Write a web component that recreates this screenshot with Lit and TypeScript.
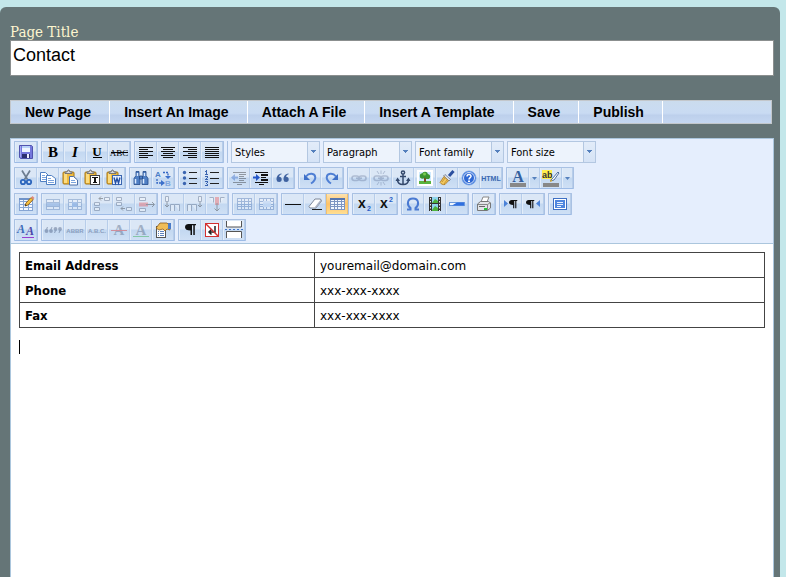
import { LitElement, html, css, svg, nothing, TemplateResult } from "lit";
import { customElement, property } from "lit/decorators.js";
import { classMap } from "lit/directives/class-map.js";

type Box = [number, number, number, number];
const fillBoxes = (color: string, boxes: Box[]) =>
  svg`<g fill=${color} shape-rendering="crispEdges">${boxes.map(
    ([x, y, w, h]) => svg`<rect x=${x} y=${y} width=${w} height=${h}/>`
  )}</g>`;
const textLines = (xs: number[][]) =>
  fillBoxes("#111", xs.map(([x, w], i) => [x, 5 + i * 2, w, 1] as Box));
const gridIcon = (x: number, y: number, w: number, h: number, cols: number, rows: number, c = "#5c7fb5") => {
  const boxes: Box[] = [];
  for (let i = 0; i <= cols; i++) boxes.push([x + Math.round((i * (w - 1)) / cols), y, 1, h]);
  for (let i = 0; i <= rows; i++) boxes.push([x, y + Math.round((i * (h - 1)) / rows), w, 1]);
  return svg`<rect x=${x} y=${y} width=${w} height=${h} fill="#f4f8ff"/>${fillBoxes(c, boxes)}`;
};
const clipboard = svg`
  <rect x="3" y="4" width="11" height="12" rx="1" fill="#f0bb3f" stroke="#a67512"/>
  <rect x="4" y="5" width="3" height="10" fill="#fbdc82"/>
  <path d="M5 5.500V4h2l1-2h1l1 2h2v1.500z" fill="#d8d9dc" stroke="#5e6068" stroke-width=".8"/>`;
const pilcrow = (x: number, y: number, scale = 1) => svg`
  <path transform="translate(${x} ${y}) scale(${scale})" d="M3.500 0H11v1.300H9.800V11H8.300V1.300H7V11H5.500V6.500C2 6.500 0 5.200 0 3.200C0 1.200 1.500 0 3.500 0z" fill="#111"/>`;
const strokeText = (s: string, x: number, size: number, fill: string) =>
  svg`<text x=${x} y="14" text-anchor="middle" font-family="Liberation Sans, sans-serif" font-weight="700" font-size=${size} fill=${fill}>${s}</text>`;
const serif = (s: string, fill: string, extra = "") =>
  svg`<text x="10" y="15" text-anchor="middle" font-family="Liberation Serif, serif" font-weight="700" font-style=${extra || "normal"} font-size="15" fill=${fill}>${s}</text>`;
const link = svg`<g fill="none" stroke="#6c7ea0" stroke-width="1.600"><rect x="3" y="8" width="7" height="4.500" rx="2.200"/><rect x="10" y="8" width="7" height="4.500" rx="2.200"/><path d="M7 10.200h6"/></g>`;

const ICONS: Record<string, TemplateResult> = {
  save: svg`<path d="M3.500 3.500h12l1 1v12h-12l-1-1z" fill="#7577dc" stroke="#5053ae"/>
    <rect x="6" y="4" width="8" height="6" fill="#eef5ff"/><rect x="6" y="4" width="8" height="2" fill="#b8d2f8"/>
    <rect x="6" y="12" width="8" height="4" fill="#2c2f70"/><rect x="11" y="12" width="2" height="4" fill="#eef"/>
    <rect x="4" y="4" width="1" height="11" fill="#a5a9f2"/>`,
  bold: serif("B", "#000"),
  italic: serif("I", "#000", "italic"),
  underline: svg`<text x="10" y="14" text-anchor="middle" font-family="Liberation Serif, serif" font-weight="700" font-size="13" fill="#000">U</text>${fillBoxes("#000", [[6, 15, 9, 1]])}`,
  strike: svg`<text x="10" y="14" text-anchor="middle" font-family="Liberation Serif, serif" font-size="9" fill="#000">ABC</text>${fillBoxes("#000", [[2, 10, 17, 1]])}`,
  left: textLines([[3, 14], [3, 9], [3, 14], [3, 9], [3, 14], [3, 9]]),
  center: textLines([[3, 14], [5, 10], [3, 14], [5, 10], [3, 14], [5, 10]]),
  right: textLines([[3, 14], [8, 9], [3, 14], [8, 9], [3, 14], [8, 9]]),
  full: textLines([[3, 14], [3, 14], [3, 14], [3, 14], [3, 14], [3, 14]]),
  cut: svg`<path d="M6 2.500l5.500 9M14 2.500l-5.500 9" stroke="#6d7d90" stroke-width="1.700"/>
    <g fill="none" stroke="#2d66bd" stroke-width="1.800"><circle cx="7" cy="14" r="2.200"/><circle cx="13" cy="14" r="2.200"/></g>`,
  copy: svg`<g fill="#fff" stroke="#4f7fc2"><path d="M2.500 4.500h5l3 3v6h-8z"/><path d="M8.500 7.500h5l4 3v6h-9z"/></g>
    ${fillBoxes("#7aa3dc", [[4, 7, 3, 1], [4, 9, 4, 1], [4, 11, 4, 1], [10, 10, 3, 1], [10, 12, 6, 1], [10, 14, 6, 1]])}`,
  paste: svg`${clipboard}<path d="M9.500 8.500h4l4 3.500v5h-8z" fill="#fff" stroke="#4c6fa8"/>${fillBoxes("#7aa3dc", [[11, 12, 4, 1], [11, 14, 5, 1]])}`,
  pastetext: svg`${clipboard}<rect x="8.500" y="7.500" width="9" height="9" fill="#fff" stroke="#444"/>${fillBoxes("#111", [[10, 9, 6, 1], [12, 9, 2, 6], [11, 14, 4, 1]])}`,
  pasteword: svg`${clipboard}<rect x="8.500" y="7.500" width="9" height="9" fill="#e9f1ff" stroke="#3b66b0"/><path d="M10 9.500l1.500 5.500 1.500-4.500 1.500 4.500L16 9.500" fill="none" stroke="#2450a5" stroke-width="1.400"/>`,
  find: svg`<g fill="#4f7fc4" stroke="#254a88" stroke-width=".8"><path d="M5 3.500h3v4l1 3v6H3v-6l2-3z"/><path d="M12 3.500h3v4l2 3v6h-6v-6l1-3z"/><path d="M8.500 8h3v3h-3z"/></g>
    <path d="M4.500 11v4.500M12.500 11v4.500M6.500 5v3M13.500 5v3" stroke="#dcebff" stroke-width="1.500"/>`,
  replace: svg`<text x="2" y="9" font-family="Liberation Sans, sans-serif" font-weight="700" font-size="8" fill="#4d7fc8">A</text>
    <text x="12" y="18" font-family="Liberation Sans, sans-serif" font-weight="700" font-size="8" fill="#7fa6de">B</text>
    <path d="M10 4.500h5v5M4 11v4h5" fill="none" stroke="#3467c4" stroke-width="1.300" stroke-dasharray="2 1"/><path d="M12 8h6l-3 3zM8 12l4 3-4 3z" fill="#3c70cc"/>`,
  bullets: svg`<g fill="#3a64b0"><circle cx="4.500" cy="4.500" r="1.700"/><circle cx="4.500" cy="10" r="1.700"/><circle cx="4.500" cy="15.500" r="1.700"/></g>${fillBoxes("#222", [[9, 4, 8, 1], [9, 10, 8, 1], [9, 15, 8, 1]])}`,
  numbers: svg`${fillBoxes("#3a64b0", [[4, 2, 1, 4], [3, 3, 1, 1], [3, 6, 3, 1], [3, 8, 3, 1], [5, 9, 1, 1], [4, 10, 1, 1], [3, 11, 3, 1], [3, 13, 3, 1], [5, 14, 1, 1], [4, 15, 1, 1], [5, 16, 1, 1], [3, 17, 3, 1]])}${fillBoxes("#222", [[8, 4, 9, 1], [8, 10, 9, 1], [8, 15, 9, 1]])}`,
  outdent: svg`${fillBoxes("#222", [[4, 4, 13, 1], [10, 6, 7, 1], [10, 8, 5, 1], [10, 10, 7, 1], [10, 12, 5, 1], [4, 14, 13, 1], [8, 16, 5, 1]])}<path d="M2 9.500l4-3.500v2.500h3v2H6V13z" fill="#2d62c4"/>`,
  indent: svg`${fillBoxes("#111", [[4, 4, 13, 1], [10, 6, 7, 2], [10, 9, 5, 1], [10, 11, 7, 2], [4, 14, 13, 1], [8, 16, 5, 1]])}<path d="M9 9.500L5 6v2.500H2v2h3V13z" fill="#2457c8"/>`,
  quote: svg`<g fill="#3f62a0"><path d="M8.500 5.500C5 6 3.500 8.500 3.500 11.500a2.600 2.600 0 1 0 2.600-2.700C6.300 7.500 7.200 6.600 8.700 6.300z"/><path d="M15.500 5.500c-3.500.5-5 3-5 6a2.600 2.600 0 1 0 2.600-2.700c.2-1.300 1.100-2.200 2.600-2.500z"/></g>`,
  undo: svg`<path d="M6 8.500C9 4.500 15 5 15.300 9.500c0 3-2 4.500-4.300 6" fill="none" stroke="#4f7fd4" stroke-width="2"/><path d="M4 6v6h6z" fill="#3f70c8"/>`,
  redo: svg`<path d="M14 8.500C11 4.500 5 5 4.700 9.500c0 3 2 4.500 4.300 6" fill="none" stroke="#4f7fd4" stroke-width="2"/><path d="M16 6v6h-6z" fill="#3f70c8"/>`,
  link,
  unlink: svg`${link}<path d="M6 3l2 3M10 2.500v3.500M14 3l-2 3M6 17l2-3M10 17.500V14M14 17l-2-3" stroke="#6c7ea0"/>`,
  anchor: svg`<g fill="none" stroke="#34496d" stroke-width="1.500"><circle cx="10" cy="4.500" r="1.600"/><path d="M10 6v10.500M7 8.500h6M4.500 11.500c0 3.500 2.500 5 5.500 5s5.500-1.500 5.500-5"/></g><path d="M2.500 13l2-3.500L7 13zM13 13l2.500-3.500 2 3.500z" fill="#34496d"/>`,
  image: svg`<rect x="2" y="2" width="16" height="16" fill="#fff"/><rect x="4" y="4" width="12" height="12" fill="#cfeaff"/><rect x="4" y="13" width="12" height="3" fill="#58b33f"/><rect x="9" y="9" width="2" height="5" fill="#7a4a1e"/>
    <g fill="#3b9430"><circle cx="7.500" cy="8" r="2.700"/><circle cx="10" cy="6.500" r="2.800"/><circle cx="12.500" cy="8.500" r="2.600"/></g><circle cx="9.500" cy="6" r="1.500" fill="#79cc50"/>`,
  cleanup: svg`<path d="M16.500 3L12 8" stroke="#2b4f9e" stroke-width="3"/><path d="M8 6.500l5.500 5-1.500 1.500-5.500-5z" fill="#dbe2ee" stroke="#6f7686" stroke-width=".8"/><path d="M7 8.500l4.500 4.200L8 16.500c-2 .5-4-.5-5-2z" fill="#f0c860" stroke="#a8731b" stroke-width=".8"/><path d="M8 10l-3 4M10 12l-3 4" stroke="#c08a28" stroke-width=".8"/>`,
  help: svg`<circle cx="10" cy="10" r="7" fill="#3572dc" stroke="#7aa4e4" stroke-width=".8"/><circle cx="10" cy="10" r="5.500" fill="#2e68d4" stroke="#fff" stroke-width=".8"/><path d="M8 8.500c0-3 4.300-2.500 4 0-.2 1.200-2 1.300-2 3" fill="none" stroke="#fff" stroke-width="1.500"/><rect x="9" y="12.500" width="2" height="1.500" fill="#fff"/>`,
  html: svg`<text x="10" y="13" text-anchor="middle" font-family="Liberation Sans, sans-serif" font-weight="700" font-size="7" fill="#3a68b0">HTML</text>`,
  forecolor: svg`<text x="10" y="14" text-anchor="middle" font-family="Liberation Serif, serif" font-weight="700" font-size="16" fill="#34609f">A</text>${fillBoxes("#888", [[2, 15, 16, 4]])}`,
  backcolor: svg`<rect x="1" y="2" width="10" height="9" fill="#fff04d"/><text x="1" y="10" font-family="Liberation Sans, sans-serif" font-weight="700" font-size="9" fill="#333">ab</text><path d="M17 4l-6 7-2 2 4-1 5-7z" fill="#fff" stroke="#4f6f9f"/><path d="M9.500 11l2 2-2.500 1z" fill="#ddb030"/>${fillBoxes("#888", [[2, 15, 16, 4]])}`,
  table: svg`${gridIcon(3, 4, 14, 13, 3, 4, "#86a5d4")}<rect x="3" y="4" width="14" height="2" fill="#6f93c9"/><path d="M9 12l1-3 5-5.500 2.200 2L12 11z" fill="#f5bf3e" stroke="#8d5f18" stroke-width=".9"/><path d="M15 3.500l1.500-1.500 2 2L17 5.500z" fill="#e08a7e"/><path d="M9 12l.6-1.800 1.200 1.100z" fill="#222"/>`,
  rowprops: svg`${gridIcon(3, 5, 14, 11, 2, 3)}<rect x="4" y="9" width="12" height="3" fill="#7ba3dd"/>`,
  cellprops: svg`${gridIcon(3, 5, 14, 11, 3, 3)}<rect x="7" y="8" width="5" height="5" fill="#5f8fd6"/>`,
  rowbefore: svg`<g fill="#fff" stroke="#53627d"><path d="M2.500 8.500h5v3h-5zM2.500 13.500h5v3h-5zM12.500 3.500h5v3h-5z"/></g><path d="M11 4.500H7M9 2.500l-2 2 2 2" fill="none" stroke="#333"/>`,
  rowafter: svg`<g fill="#fff" stroke="#53627d"><path d="M2.500 3.500h5v3h-5zM2.500 8.500h5v3h-5zM12.500 13.500h5v3h-5z"/></g><path d="M11 14.500H7M9 12.500l-2 2 2 2" fill="none" stroke="#333"/>`,
  rowdel: svg`<g fill="#fff" stroke="#53627d"><path d="M3.500 3.500h6v3h-6zM3.500 14.500h6v3h-6z"/></g><rect x="3" y="8.500" width="9" height="4" fill="#e55"/><path d="M10 10.500h8M16 8l2.500 2.500L16 13" fill="none" stroke="#333"/>`,
  colbefore: svg`<g fill="#fff" stroke="#53627d"><path d="M2.500 2.500h3v5h-3zM7.500 17v-6.500h4V17M11.500 10.500h5V17"/></g><path d="M4 8v5M2 11l2 2 2-2" fill="none" stroke="#333"/>`,
  colafter: svg`<g fill="#fff" stroke="#53627d"><path d="M13.500 2.500h3v5h-3zM2.500 17v-6.500h4V17M6.500 10.500h5V17"/></g><path d="M15 8v5M13 11l2 2 2-2" fill="none" stroke="#333"/>`,
  coldel: svg`<g fill="#fff" stroke="#53627d"><path d="M2.500 3.500h4v5M17.500 3.500h-4v5"/></g><rect x="8" y="3" width="4" height="8" fill="#e55"/><path d="M10 9v8M7.500 14.500L10 17l2.500-2.500" fill="none" stroke="#333"/>`,
  split: gridIcon(3, 4, 15, 12, 4, 4, "#4a72b2"),
  merge: svg`${gridIcon(3, 4, 15, 12, 4, 4, "#4a72b2")}<rect x="7" y="7" width="8" height="6" fill="#b9d2f5"/>`,
  hr: fillBoxes("#111", [[2, 10, 16, 1]]),
  eraser: svg`<path d="M4 12.500l6-7.500h5.500l1 2L11 14H5z" fill="#fff" stroke="#7d8799"/><path d="M10.500 13.500l5.500-7" stroke="#aab3c4" stroke-width="1.500"/><path d="M7 15.500h10" stroke="#222"/>`,
  guides: svg`${gridIcon(3, 4, 15, 12, 4, 4, "#7d95c2")}<rect x="3" y="4" width="15" height="2" fill="#5676ae"/>`,
  sub: svg`${strokeText("x", 8, 14, "#111")}<text x="13" y="17" font-family="Liberation Sans, sans-serif" font-weight="700" font-size="7" fill="#2a60c8">2</text>`,
  sup: svg`${strokeText("x", 8, 14, "#111")}<text x="13" y="8" font-family="Liberation Sans, sans-serif" font-weight="700" font-size="7" fill="#2a60c8">2</text>`,
  omega: svg`<path d="M4 15.500h3.500v-1.500C3.500 11 4 4.500 10 4.500S16.500 11 12.500 14v1.500H16" fill="none" stroke="#4a7ad2" stroke-width="2"/>`,
  media: svg`<rect x="4" y="3" width="12" height="14" fill="#333"/><rect x="7" y="3" width="6" height="6" fill="#8fd4ee"/><rect x="7" y="10" width="6" height="7" fill="#8fd4ee"/><path d="M7 9l3-4 3 2v2zM7 16l3-4 3 2v3H7z" fill="#4db33d"/><path d="M5.500 4v13M14.500 4v13" stroke="#eee" stroke-dasharray="1.500 1.500"/>`,
  advhr: svg`<rect x="2.500" y="8.500" width="15" height="3" fill="#f2f8ff" stroke="#6a99dc"/><path d="M5 11.500l5-3h7v3z" fill="#2f6fe0"/>`,
  print: svg`<path d="M7 8l2-5h6l-2 5z" fill="#fff" stroke="#888"/><path d="M3.500 10l3-2.500h8l2 1.500V14l-3 2.500h-10z" fill="#e2e4e8" stroke="#777"/><path d="M4 10.500h9.500l3-2M13.500 10.500v6" fill="none" stroke="#888"/><rect x="5" y="12" width="6" height="1" fill="#666"/><rect x="10" y="14" width="3" height="2" fill="#23c93b"/>`,
  ltr: svg`<path d="M3 6v7l4-3.500z" fill="#4b82d8"/>${pilcrow(8, 6, 0.75)}`,
  rtl: svg`<path d="M17 6v7l-4-3.500z" fill="#4b82d8"/>${pilcrow(3, 6, 0.75)}`,
  fullscreen: svg`<rect x="3.500" y="4.500" width="13" height="11" fill="#fff" stroke="#3e70c4"/><rect x="5" y="6" width="10" height="8" fill="#4f86de"/>${fillBoxes("#e8f1ff", [[7, 8, 6, 1], [7, 10, 6, 1], [7, 12, 4, 1]])}`,
  style: svg`<text x="1" y="13" font-family="Liberation Serif, serif" font-style="italic" font-weight="700" font-size="12" fill="#3b6bb8">A</text><text x="10" y="15" font-family="Liberation Serif, serif" font-style="italic" font-weight="700" font-size="12" fill="#4a46a8">A</text>${fillBoxes("#9a3fd0", [[6, 17, 12, 1]])}`,
  cite: svg`<g fill="#3d4f74"><circle cx="3.500" cy="11" r="1.900"/><circle cx="8" cy="11" r="1.900"/><circle cx="12.500" cy="9" r="1.900"/><circle cx="17" cy="9" r="1.900"/><path d="M2 11l2-4h1l-1 3zM6.500 11l2-4h1l-1 3zM14 9l-2 4h-1l1-3zM18.500 9l-2 4h-1l1-3z"/></g>`,
  abbr: svg`<text x="10" y="13" text-anchor="middle" font-family="Liberation Sans, sans-serif" font-weight="700" font-size="6" fill="#2d4470">ABBR</text>`,
  acronym: svg`<text x="10" y="13" text-anchor="middle" font-family="Liberation Sans, sans-serif" font-weight="700" font-size="6" fill="#2d4470">A.B.C.</text>`,
  del: svg`${serif("A", "#4e5f7e")}${fillBoxes("#e02020", [[2, 10, 16, 1]])}`,
  ins: svg`${serif("A", "#4e5f7e")}${fillBoxes("#1fa838", [[2, 16, 16, 1]])}`,
  attribs: svg`<rect x="3.500" y="6.500" width="9" height="11" fill="#fff" stroke="#555"/>${fillBoxes("#5d82bd", [[5, 11, 1, 1], [7, 11, 4, 1], [5, 13, 1, 1], [7, 13, 4, 1], [5, 15, 1, 1], [7, 15, 4, 1]])}<path d="M3 8l4-5h7l3 3v4l-3-1-2 2-2-2-4 1z" fill="#efbd58" stroke="#8a5c1c" stroke-width=".8"/><rect x="15" y="3" width="3" height="6" fill="#4b7cc8"/>`,
  visual: pilcrow(5, 4),
  nonbreaking: svg`<rect x="3.500" y="3.500" width="13" height="13" fill="#fff" stroke="#d23030"/><path d="M13 6v6H7M9.500 9.500L7 12l2.500 2.500" fill="none" stroke="#222" stroke-width="1.500"/><path d="M4 4l12 12" stroke="#d23030" stroke-width="1.400"/>`,
  pagebreak: svg`<path d="M2.500 1v6h15V1M2.500 18v-6.500h15V18" fill="#fff" stroke="#555"/>${fillBoxes("#3d74cc", [[1, 9, 2, 1], [5, 9, 2, 1], [9, 9, 2, 1], [13, 9, 2, 1], [17, 9, 2, 1]])}`,
};

interface Tool { icon: string; label: string; off?: boolean; on?: boolean; menu?: boolean }
// "-name" is a disabled tool, "+name" a pressed one, "name>" one that opens a palette.
const tools = (line: string): Tool[][] =>
  line.split("|").map((group) =>
    group.trim().split(/\s+/).map((t) => {
      const icon = t.replace(/[-+>]/g, "");
      return { icon, label: icon, off: t[0] === "-", on: t[0] === "+", menu: t.endsWith(">") };
    })
  );

const ROWS: Tool[][][] = [
  tools("save | bold italic underline strike | left center right full"),
  tools("cut copy paste pastetext pasteword | find replace | bullets numbers | -outdent indent quote | undo redo | -link -unlink anchor image cleanup help html | forecolor> backcolor>"),
  tools("table | -rowprops -cellprops | -rowbefore -rowafter -rowdel | -colbefore -colafter -coldel | -split -merge | hr eraser +guides | sub sup | omega media advhr | print | ltr rtl | fullscreen"),
  tools("style | -cite -abbr -acronym -del -ins attribs | visual nonbreaking pagebreak"),
];

@customElement("tool-button")
export class ToolButton extends LitElement {
  @property({ attribute: false }) tool!: Tool;

  static styles = css`
    :host { display: flex; }
    button {
      box-sizing: border-box;
      width: 22px;
      height: 20px;
      padding: 0;
      border: 0;
      border-left: 1px solid #e3edf9;
      border-right: 1px solid #b7cdea;
      display: flex;
      justify-content: center;
      background: linear-gradient(#dbe7f6 0 45%, #c3d8f1 50%, #cfe0f5);
    }
    button.on {
      border-color: #f0c070;
      background: linear-gradient(#fde3b0, #ffc266 50%, #ffdf94);
    }
    button.menu { width: 11px; align-items: center; }
    svg { display: block; flex: none; }
    .off svg { opacity: 0.4; }
  `;

  render() {
    const { icon, label, off, on, menu } = this.tool;
    return html`
      <button class=${classMap({ off: !!off, on: !!on })} aria-label=${label} ?disabled=${off}>
        <svg width="20" height="20" viewBox="0 0 20 20">${ICONS[icon]}</svg>
      </button>
      ${menu
        ? html`<button class="menu" aria-label="${label} menu">
            <svg width="5" height="3" viewBox="0 0 5 3"><path d="M0 0h5L2.500 3z" fill="#5580bd" /></svg>
          </button>`
        : nothing}
    `;
  }
}

@customElement("app-root")
export class AppRoot extends LitElement {
  static styles = css`
    :host {
      display: flex;
      flex-direction: column;
      box-sizing: border-box;
      min-height: 100vh;
      padding: 7px 6px 0 0;
      background: #c3e7ea;
      font-family: "DejaVu Sans", Verdana, sans-serif;
      color: #000;
    }
    .panel {
      flex: 1;
      display: flex;
      flex-direction: column;
      padding: 17px 6px 0 10px;
      border-radius: 6px 6px 0 0;
      background: #657577;
    }
    .title-label {
      font-family: "DejaVu Serif Condensed", "DejaVu Serif", serif;
      font-size: 15px;
      line-height: 16px;
      color: #fdf6cf;
    }
    .title {
      box-sizing: border-box;
      width: 100%;
      height: 36px;
      margin: 0;
      padding: 0 2px 6px;
      border: 1px solid #8b8f8f;
      background: #fff;
      color: #000;
      font: 18px "Liberation Sans", Arial, sans-serif;
    }
    .menu {
      display: flex;
      height: 22px;
      margin: 24px 2px 14px 0;
      border: 1px solid #c3c7cb;
      background: linear-gradient(#cbdcee, #c9dbf3 55%, #bdd0ec 65%, #c5d7f1);
    }
    .menu button {
      padding: 0 18px 0 14px;
      border: 0;
      border-right: 1px solid #fff;
      background: none;
      color: #000;
      font: bold 14px "Liberation Sans", Arial, sans-serif;
    }
    .editor {
      flex: 1;
      display: flex;
      flex-direction: column;
      border: 1px solid #abc6dd;
      border-bottom: 0;
      background: #fff;
    }
    .toolbar {
      display: flex;
      flex-direction: column;
      gap: 4px;
      padding: 2px 3px;
      border-bottom: 1px solid #abc6dd;
      background: #e5eefd;
    }
    .row { display: flex; gap: 3px; }
    .group {
      display: flex;
      border: 1px solid #a9c1e3;
      border-bottom-color: #9dbbe6;
      border-radius: 1px;
    }
    .divider { width: 1px; background: #a9c1e3; }
    .lists { display: flex; gap: 3px; }
    select {
      appearance: none;
      box-sizing: border-box;
      width: 89px;
      height: 22px;
      padding: 0 14px 0 3px;
      border: 1px solid #b3c7e1;
      border-radius: 0;
      color: #000;
      font: 11px "DejaVu Sans Condensed", "DejaVu Sans", Tahoma, sans-serif;
      background:
        linear-gradient(#5580bd, #5580bd) right 3px top 8px / 5px 1px no-repeat,
        linear-gradient(#5580bd, #5580bd) right 4px top 9px / 3px 1px no-repeat,
        linear-gradient(#5580bd, #5580bd) right 5px top 10px / 1px 1px no-repeat,
        linear-gradient(#b3c7e1, #b3c7e1) right 11px top 0 / 1px 100% no-repeat,
        linear-gradient(#e2ecf9, #d5e3f6) right 0 top 0 / 11px 100% no-repeat,
        #edf3fc;
    }
    .page { flex: 1; padding: 8px; font-size: 12px; }
    table { width: 100%; border-collapse: collapse; table-layout: fixed; }
    th, td {
      box-sizing: border-box;
      height: 25px;
      padding: 1px 5px 0;
      border: 1px solid #444;
      text-align: left;
      font-weight: 400;
      line-height: 14px;
    }
    th {
      width: 39.6%;
      font: bold 13px/14px "DejaVu Sans Condensed", "DejaVu Sans", Tahoma, sans-serif;
    }
    .line { margin: 12px 0 0; height: 14px; }
    .caret { display: block; width: 1px; height: 14px; background: #000; }
  `;

  private menuItems = ["New Page", "Insert An Image", "Attach A File", "Insert A Template", "Save", "Publish"];
  private lists = ["Styles", "Paragraph", "Font family", "Font size"];
  private contact = [
    ["Email Address", "youremail@domain.com"],
    ["Phone", "xxx-xxx-xxxx"],
    ["Fax", "xxx-xxx-xxxx"],
  ];

  render() {
    return html`
      <main class="panel">
        <label class="title-label" for="title">Page Title</label>
        <input class="title" id="title" type="text" value="Contact" />
        <nav class="menu">${this.menuItems.map((m) => html`<button>${m}</button>`)}</nav>
        <section class="editor">
          <div class="toolbar" role="toolbar">
            ${ROWS.map(
              (groups, i) => html`<div class="row">
                ${groups.map(
                  (g) => html`<div class="group">${g.map((t) => html`<tool-button .tool=${t}></tool-button>`)}</div>`
                )}
                ${i === 0
                  ? html`<span class="divider"></span>
                      <div class="lists">
                        ${this.lists.map((l) => html`<select aria-label=${l}><option>${l}</option></select>`)}
                      </div>`
                  : nothing}
              </div>`
            )}
          </div>
          <div class="page">
            <table>
              ${this.contact.map(([k, v]) => html`<tr><th scope="row">${k}</th><td>${v}</td></tr>`)}
            </table>
            <p class="line"><span class="caret"></span></p>
          </div>
        </section>
      </main>
    `;
  }
}
